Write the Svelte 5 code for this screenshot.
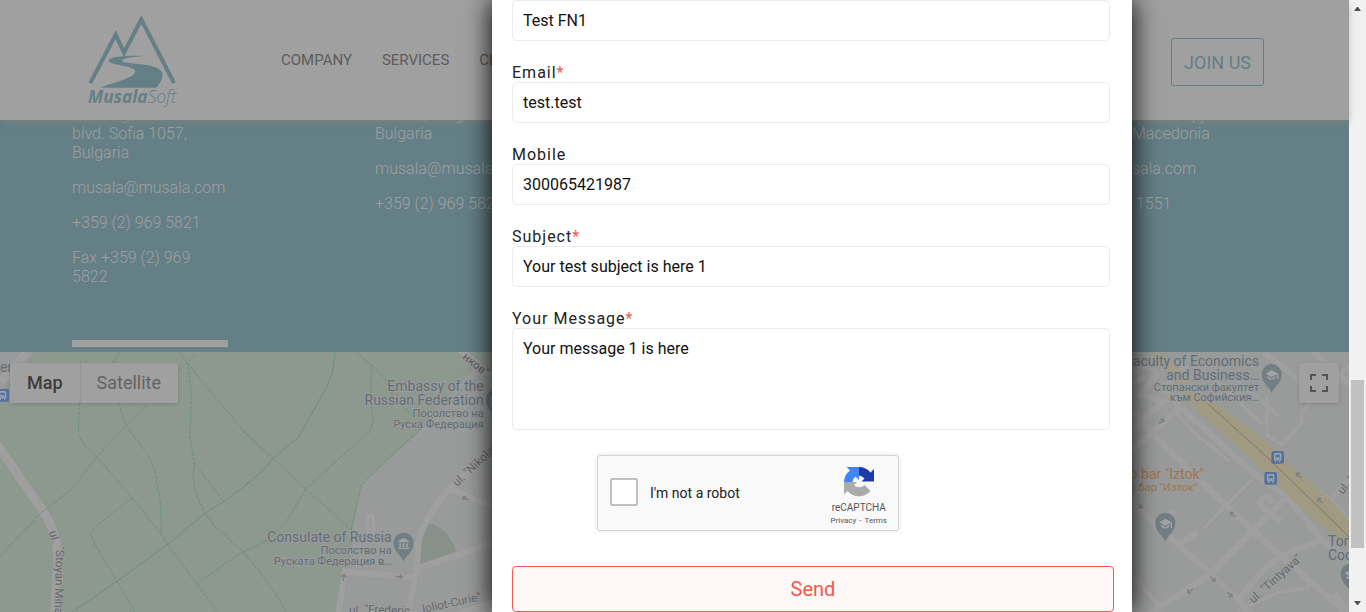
<script>
  const nav = ['COMPANY', 'SERVICES', 'CLIENTS'];
  const offices = [
    {
      address: ['36, Dragan', 'blvd. Sofia 1057,', 'Bulgaria'],
      lines: ['musala@musala.com', '+359 (2) 969 5821', 'Fax +359 (2) 969 5822'],
      active: true
    },
    { address: ['Floor 3, Drag', 'Bulgaria'], lines: ['musala@musala.com', '+359 (2) 969 5821'] },
    { address: [], lines: [] },
    { address: ['000, Skopje', 'Macedonia'], lines: ['sala.com', '\u00a01551'] }
  ];
  const fields = [
    { id: 'name', label: '', required: true },
    { id: 'email', label: 'Email', required: true },
    { id: 'mobile', label: 'Mobile', required: false },
    { id: 'subject', label: 'Subject', required: true }
  ];
  let values = $state({
    name: 'Test FN1',
    email: 'test.test',
    mobile: '300065421987',
    subject: 'Your test subject is here 1',
    message: 'Your message 1 is here'
  });
</script>

<div class="window">
  <main class="page">
    <header>
      <a class="logo" href="#home" aria-label="MusalaSoft">
        <svg width="92" height="92" viewBox="0 0 276 276">
          <path d="M7 201 83 56 108 110 160 10 258 201" fill="none" stroke="currentColor" stroke-width="12" />
          <path d="M168 120C110 118 64 122 62 134C62 148 140 147 142 166C140 188 72 200 38 215H205C222 196 228 178 220 166C200 138 104 146 102 134C103 126 135 123 168 120Z" fill="currentColor" />
          <text x="0" y="262" font-size="52" font-style="italic" fill="currentColor"><tspan font-weight="700">Musala</tspan><tspan font-weight="300">Soft</tspan></text>
        </svg>
      </a>
      <nav>
        {#each nav as item}<a href="#{item.toLowerCase()}">{item}</a>{/each}
      </nav>
      <button class="join" type="button">JOIN US</button>
    </header>

    <section class="offices">
      {#each offices as office}
        <div class="office">
          <p>{#each office.address as line}<span>{line}</span>{/each}</p>
          {#each office.lines as line}<p>{line}</p>{/each}
          {#if office.active}<div class="marker"></div>{/if}
        </div>
      {/each}
    </section>

    <section class="map">
      <svg class="tiles" viewBox="0 0 1349 260" preserveAspectRatio="xMinYMin slice" aria-hidden="true">
        <defs>
          <g id="pin">
            <path d="M0 44C-3 26-30 16-30-14A30 30 0 0 1 30-14C30 16 3 26 0 44Z" fill="#737e84" />
          </g>
          <g id="school">
            <use href="#pin" />
            <path d="M-18-15 0-26 20-15 0-5ZM-12-8 0 0 12-8V-2Q0 9-12-2ZM16-13H20V2H16Z" fill="#a0a4a6" />
          </g>
          <g id="museum">
            <use href="#pin" />
            <path d="M-16-19 0-28 16-19V-15H-16ZM-13-12H-8V0H-13ZM-3-12H3V0H-3ZM8-12H13V0H8ZM-16 1H16V5H-16Z" fill="#a0a4a6" />
          </g>
          <g id="bus">
            <rect x="-19" y="-19" width="38" height="38" rx="6" fill="#55729f" />
            <path d="M-11-9Q-11-13-7-13H7Q11-13 11-9V9H8V13H4V9H-4V13H-8V9H-11Z" fill="#9aa3b0" />
            <path d="M-7-8H7V0H-7ZM-7 3H-4V6H-7ZM4 3H7V6H4Z" fill="#55729f" />
          </g>
          <path id="arrow" d="M-11 0H8M1-7 9 0 1 7" fill="none" stroke="#7b8086" stroke-width="4" />
        </defs>
        <rect width="1349" height="260" fill="#989b9a" />
        <path d="M0 0H487L417 82 361 133 352 180 350 219H342L337 260H0Z" fill="#8d988e" />

        <svg y="-7" width="250" height="267" viewBox="0 0 750 801" overflow="visible">
          <path d="M0 20H105L30 110 0 140Z" fill="#97999a" />
          <path d="M82 20 0 112" class="street wide" />
          <path d="M-10 298 128 496Q170 560 173 630L163 810" class="street wide" />
          <g class="trail">
            <path d="M0 635 118 508 216 432 290 336 378 242 442 178M530 85 588 28" />
            <path d="M238 175 235 270 250 298 290 336 396 458 442 514 484 570 502 598 590 715 660 810" />
            <path d="M356 25 340 55M357 175 378 242 440 325Q464 360 470 410L481 470 484 570" />
            <path d="M396 458 288 544 272 566 280 590 351 709 410 810" />
            <path d="M538 22 563 55 575 150 569 270 582 352 580 400Q584 450 616 504L640 540 750 640" />
            <path d="M563 55 660 175 750 275M582 352 672 470M590 715 726 622 750 612" />
          </g>
          <path d="M200 812 351 709 502 598 616 504 672 470 750 410" class="path" />
          <g class="road-name">
            <text transform="translate(147 560) rotate(76)">ul.</text>
            <text transform="translate(168 604) rotate(91)">"Stoyan Mihaylovski"</text>
          </g>
          <text x="0" y="80" text-anchor="start" class="place">er</text>
          <use href="#bus" x="8" y="151" />
        </svg>

        <svg x="245" y="-7" width="260" height="267" viewBox="0 0 780 801" overflow="visible">
          <path d="M670 20H780V110L708 90Z" fill="#8d988e" />
          <path d="M550 535Q615 550 636 628L515 668 524 600Z" fill="#87918a" />
          <g class="street">
            <path d="M367 580V522Q367 511 376 511 385 511 385 522V580" class="thin" />
            <path d="M490 810 515 670 520 590Q535 520 615 430L780 290" />
            <path d="M615 430Q680 468 780 490M505 675 780 582M640 10 780 125" />
            <path d="M280 810 300 680 500 697M620 810 780 760M710 795V830" />
          </g>
          <g class="trail">
            <path d="M-15 250 84 340 182 432 318 555M182 432 130 520Q80 590 0 618M182 432 300 325 376 258 385 215 378 180 379 60" />
            <path d="M335 24 379 60 420 100 445 155 505 215M-5 622 60 700 130 806" />
            <path d="M318 555 349 422 430 340 530 250 640 145 708 90" />
          </g>
          <path d="M0 421 55 376 84 340 162 275 248 120 263 80 270 25" class="path" />
          <use href="#arrow" transform="translate(463 695) rotate(5)" />
          <use href="#arrow" transform="translate(296 697) rotate(-82)" />
          <use href="#arrow" transform="translate(661 460) rotate(205)" />
          <g class="road-name">
            <text transform="translate(636 426) rotate(-43)">ul. "Nikolay</text>
            <text transform="translate(650 40) rotate(38)" font-weight="500">нков"</text>
            <text transform="translate(312 806)">ul.</text>
            <text transform="translate(358 804) rotate(2)">"Frederic</text>
            <text transform="translate(524 806) rotate(-12)">Joliot-Curie"</text>
          </g>
          <g class="place">
            <text x="716" y="138">Embassy of the</text>
            <text x="716" y="180">Russian Federation</text>
            <text x="716" y="216" class="local">Посолство на</text>
            <text x="716" y="248" class="local">Руска Федерация</text>
            <text x="440" y="591">Consulate of Russia</text>
            <text x="440" y="626" class="local">Посолство на</text>
            <text x="440" y="659" class="local">Руската Федерация в…</text>
          </g>
          <use href="#museum" x="752" y="177" />
          <use href="#museum" x="476" y="607" />
        </svg>

        <svg x="1120" y="-7" width="246" height="267" viewBox="0 0 738 801" overflow="visible">
          <g class="street">
            <path d="M30 80 90 60 110 90 60 150 130 170 30 255M30 120 75 95M40 200 95 265 400 560 560 700 690 812" />
            <path d="M30 320 95 265 180 185 400 385 500 455 610 590 690 640M180 185 130 130 200 60" />
            <path d="M170 200Q200 250 250 285L330 350M415 385 250 550" class="thin" />
            <path d="M20 445 75 510 175 600 275 690 355 765 400 810M110 545 162 495M175 600 235 560" />
            <path d="M80 812 275 685 395 560 500 455M355 765 415 690 470 640 610 580" />
            <path d="M30 690 130 790M485 530 425 485Q415 470 430 460 450 450 460 475" />
            <path d="M440 150V270L485 300 545 235V200L690 60M280 100 430 240" class="thin" />
            <path d="M430 20 580 140M580 20 690 120" />
            <path d="M350 800 480 740 560 730 580 700M330 90 480 215" class="thin" />
            <path d="M635 460 690 400M430 325 635 470 690 530M640 745 690 800" />
          </g>
          <path d="M90 25H130L235 135 420 275 640 475 700 540V625L660 590 535 482 390 338 240 208 150 95Z" fill="#a19a83" />
          <path d="M262 175 440 335 700 588" fill="none" stroke="#887955" stroke-width="3" />
          <use href="#arrow" transform="translate(125 229) rotate(-45)" />
          <use href="#arrow" transform="translate(536 391) rotate(225)" />
          <use href="#arrow" transform="translate(600 467) rotate(225)" />
          <use href="#arrow" transform="translate(338 508) rotate(225)" />
          <use href="#arrow" transform="translate(59 482) rotate(45)" />
          <use href="#arrow" transform="translate(279 702) rotate(45)" />
          <use href="#arrow" transform="translate(330 749) rotate(45)" />
          <use href="#arrow" transform="translate(210 738) rotate(145)" />
          <g class="road-name">
            <text transform="translate(400 776) rotate(-42)">ul. "Tintyava"</text>
            <text transform="translate(668 450) rotate(-50)">ul. "</text>
          </g>
          <g class="place">
            <text x="417" y="63">Faculty of Economics</text>
            <text x="417" y="105">and Business…</text>
            <text x="417" y="137" class="local">Стопански факултет</text>
            <text x="417" y="168" class="local">към Софийския…</text>
            <text x="624" y="603" class="start">Tom's</text>
            <text x="624" y="645" class="start">Coooo</text>
          </g>
          <g class="place food">
            <text x="252" y="402">Piano bar "Iztok"</text>
            <text x="232" y="437" class="local">Пиано бар "Изток"</text>
          </g>
          <use href="#school" x="455" y="101" />
          <use href="#school" x="136" y="547" />
          <use href="#school" x="692" y="700" />
          <use href="#bus" x="473" y="337" />
          <use href="#bus" x="452" y="400" />
        </svg>
      </svg>
      <div class="controls">
        <div class="types">
          <button type="button" class="selected">Map</button>
          <button type="button">Satellite</button>
        </div>
        <button type="button" class="full" aria-label="Toggle fullscreen">
          <svg width="18" height="18" viewBox="0 0 18 18"><path d="M1 6V1H6M12 1H17V6M17 12V17H12M6 17H1V12" fill="none" stroke="#535353" stroke-width="2" /></svg>
        </button>
      </div>
    </section>
  </main>

  <form class="modal" onsubmit={(e) => e.preventDefault()}>
    {#each fields as field}
      <div class="field">
        {#if field.label}
          <label for={field.id}>{field.label}{#if field.required}<em>*</em>{/if}</label>
        {/if}
        <input id={field.id} type="text" aria-label={field.label ? undefined : 'Name'} bind:value={values[field.id]} />
      </div>
    {/each}
    <div class="field">
      <label for="message">Your Message<em>*</em></label>
      <textarea id="message" bind:value={values.message}></textarea>
    </div>
    <div class="captcha">
      <input id="robot" type="checkbox" />
      <label for="robot">I'm not a robot</label>
      <div class="brand">
        <svg width="32" height="32" viewBox="0 0 64 64">
          <path d="M62 31V6L55 13A30 30 0 0 0 32 2V19A16 16 0 0 1 43 25L37 31Z" fill="#1c3aa9" />
          <path d="M32 2H7L14 9A30 30 0 0 0 2 32H19A15 15 0 0 1 25 21L32 28Z" fill="#4285f4" />
          <path d="M2 32V57L9 50A30 30 0 0 0 55 50L43 38A14 14 0 0 1 22 38L28 32Z" fill="#ababab" />
        </svg>
        <strong>reCAPTCHA</strong>
        <small><a href="#privacy">Privacy</a><span>-</span><a href="#terms">Terms</a></small>
      </div>
    </div>
    <button class="send" type="submit">Send</button>
  </form>

  <div class="scrollbar" aria-hidden="true">
    <svg width="17" height="17" viewBox="0 0 17 17"><path d="M5 11 8 7H9L12 11Z" fill="#505050" /></svg>
    <div class="before"></div>
    <div class="thumb"></div>
    <div class="after"></div>
    <svg width="17" height="17" viewBox="0 0 17 17"><path d="M5 6 8 10H9L12 6Z" fill="#505050" /></svg>
  </div>
</div>

<style>
  :global(body) {
    margin: 0;
    overflow: hidden;
    background: #a0a0a0;
  }
  .window {
    position: relative;
    display: flex;
    height: 100vh;
    overflow: hidden;
    font-family: Roboto, sans-serif;
  }
  button, input, textarea {
    box-sizing: border-box;
    margin: 0;
    font-family: inherit;
  }
  a {
    color: inherit;
    text-decoration: none;
  }
  .page {
    flex: 1;
    min-width: 0;
    display: flex;
    flex-direction: column;
  }
  header {
    position: relative;
    z-index: 1;
    display: flex;
    align-items: center;
    height: 120px;
    padding: 4px 85px 0 88px;
    box-sizing: border-box;
    background: #a0a0a0;
    box-shadow: 0 4px 8px -2px rgba(130, 130, 125, 0.8);
  }
  .logo {
    display: flex;
    width: 193px;
    color: #647f86;
  }
  .logo svg {
    overflow: visible;
    font-family: "Open Sans", sans-serif;
  }
  nav {
    display: flex;
    gap: 30px;
    padding-bottom: 4px;
    font-size: 15px;
    font-weight: 400;
    color: #5c5c5c;
  }
  .join {
    margin-left: auto;
    height: 48px;
    padding: 0 12px;
    border: 1px solid #647f86;
    border-radius: 3px;
    background: none;
    color: #647f86;
    font-size: 18px;
  }
  .offices {
    display: grid;
    grid-template-columns: repeat(4, 1fr);
    height: 232px;
    box-sizing: border-box;
    padding: 0 65px 0 72px;
    overflow: hidden;
    background: #647f86;
    color: #a0a0a0;
    font-size: 16px;
    font-weight: 300;
    line-height: 19px;
  }
  .office {
    width: 156px;
    margin-top: -15px;
  }
  .office:last-child {
    justify-self: end;
    width: 152px;
  }
  .office p {
    margin: 0 0 16px;
  }
  .office span {
    display: block;
  }
  .marker {
    height: 7px;
    margin-top: 54px;
    background: #a0a0a0;
  }
  .map {
    position: relative;
    flex: 1;
    min-height: 0;
    overflow: hidden;
    background: #989b9a;
  }
  .tiles {
    display: block;
    width: 100%;
    height: 100%;
  }
  .street {
    fill: none;
    stroke: #9f9f9f;
    stroke-width: 20;
    filter: drop-shadow(0 0 1px #8c8e90);
  }
  .street.wide {
    stroke-width: 27;
  }
  .thin {
    stroke-width: 12;
  }
  .trail {
    fill: none;
    stroke: #6c907b;
    stroke-width: 3;
    stroke-dasharray: 9 4;
  }
  .path {
    fill: none;
    stroke: #6c907b;
    stroke-width: 3;
  }
  .road-name {
    font-size: 35px;
    fill: #65686a;
    stroke: #9d9e9e;
    stroke-width: 5px;
    paint-order: stroke;
  }
  .place {
    font-size: 42px;
    fill: #646c75;
    stroke: #999c9b;
    stroke-width: 6px;
    paint-order: stroke;
    text-anchor: end;
  }
  .place .local {
    font-size: 33px;
  }
  .place .start, text.place {
    text-anchor: start;
  }
  .place.food {
    fill: #a2744e;
  }
  .controls {
    position: absolute;
    inset: 11px 10px auto 10px;
    display: flex;
    justify-content: space-between;
  }
  .types {
    display: flex;
    border-radius: 2px;
    box-shadow: 0 1px 4px -1px rgba(0, 0, 0, 0.25);
  }
  .controls button {
    height: 40px;
    border: 0;
    border-radius: 2px;
    background: #a0a0a0;
    padding: 0 17px 1px;
    font-size: 18px;
    color: #636363;
  }
  .types button + button {
    padding-left: 16px;
    border-left: 1px solid #969696;
  }
  .controls .selected {
    color: #3c3c3c;
    font-weight: 500;
  }
  .controls .full {
    display: grid;
    place-items: center;
    width: 40px;
    padding: 0;
    box-shadow: 0 1px 4px -1px rgba(0, 0, 0, 0.25);
  }
  .modal {
    position: absolute;
    top: 0;
    bottom: 0;
    left: 492px;
    right: 234px;
    z-index: 2;
    box-sizing: border-box;
    padding: 0 18px 0 20px;
    background: #fff;
    box-shadow: 0 0 25px #000;
    color: #222;
  }
  .field {
    display: flex;
    flex-direction: column;
    padding-right: 4px;
    margin-bottom: 22px;
  }
  .field label {
    font-size: 16px;
    line-height: 19px;
    letter-spacing: 1px;
  }
  em {
    color: #f05a4a;
    font-style: normal;
  }
  .field input, .field textarea {
    height: 41px;
    padding: 0 10px;
    border: 1px solid #ebebeb;
    border-radius: 5px;
    background: #fff;
    color: #111;
    font-size: 16px;
    outline: none;
  }
  .field textarea {
    height: 102px;
    padding: 10px;
    line-height: 19px;
    resize: none;
  }
  .captcha {
    display: flex;
    align-items: center;
    box-sizing: border-box;
    width: 302px;
    height: 76px;
    margin: 25px auto 35px 85px;
    padding: 0 11px 0 12px;
    border: 1px solid #d3d3d3;
    border-radius: 3px;
    background: #f9f9f9;
    box-shadow: 0 0 4px 1px rgba(0, 0, 0, 0.08);
  }
  .captcha input {
    appearance: none;
    width: 28px;
    height: 28px;
    margin: 0 12px 2px 0;
    border: 2px solid #c1c1c1;
    border-radius: 2px;
    background: #fff;
  }
  .captcha label {
    font-size: 14px;
    color: #222;
  }
  .brand {
    display: flex;
    flex-direction: column;
    align-items: center;
    margin-left: auto;
    padding-top: 6px;
    color: #555;
  }
  .brand strong {
    font-size: 10px;
    font-weight: 400;
    line-height: 16px;
    margin-top: 2px;
  }
  .brand small {
    display: flex;
    gap: 3px;
    font-size: 8px;
    line-height: 10px;
  }
  .send {
    display: block;
    width: 100%;
    height: 46px;
    border: 1px solid #f05a4a;
    border-radius: 4px;
    background: #fff8f8;
    color: #f05a4a;
    font-size: 20px;
  }
  .scrollbar {
    display: flex;
    flex-direction: column;
    width: 17px;
    background: #f1f1f1;
  }
  .scrollbar svg {
    flex: none;
  }
  .before {
    flex: 363;
  }
  .thumb {
    flex: 168;
    margin: 0 2px;
    background: #c1c1c1;
  }
  .after {
    flex: 47;
  }
</style>
